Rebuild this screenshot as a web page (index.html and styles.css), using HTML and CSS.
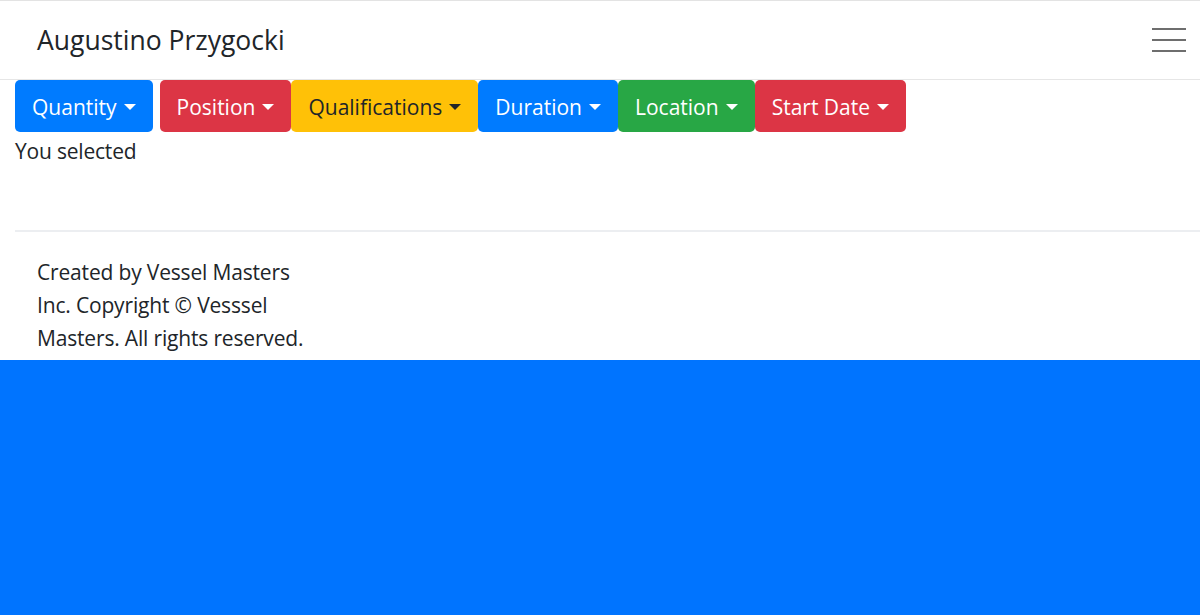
FILE: index.html
```html
<!DOCTYPE html>
<html>
<head>
<meta charset="utf-8">
<link rel="stylesheet" href="styles.css">
</head>
<body>
<div class="page">
  <nav class="navbar">
    <span class="brand">Augustino Przygocki</span>
    <button class="toggler" aria-label="menu">
      <span class="bar"></span><span class="bar"></span><span class="bar"></span>
    </button>
  </nav>
  <main class="content">
    <div class="filters">
      <button class="btn btn-blue btn-first">Quantity<span class="caret"></span></button>
      <button class="btn btn-red">Position<span class="caret"></span></button>
      <button class="btn btn-yellow">Qualifications<span class="caret"></span></button>
      <button class="btn btn-blue">Duration<span class="caret"></span></button>
      <button class="btn btn-green">Location<span class="caret"></span></button>
      <button class="btn btn-red">Start Date<span class="caret"></span></button>
    </div>
    <p class="selected">You selected</p>
    <hr class="divider">
    <footer class="footer">
      <p>Created by Vessel Masters Inc. Copyright © Vesssel Masters. All rights reserved.</p>
    </footer>
  </main>
</div>
</body>
</html>
```
FILE: styles.css
```css
html, body {
  margin: 0;
  padding: 0;
}
body {
  background: #0074ff;
  font-family: "Open Sans", "Noto Sans", sans-serif;
  color: #212529;
  height: 615px;
  overflow: hidden;
}
.page {
  background: #fff;
  height: 360px;
  border-top: 1px solid #e3e3e3;
  box-sizing: border-box;
}
.navbar {
  height: 78px;
  border-bottom: 1px solid #e6e6e6;
  display: flex;
  align-items: center;
  justify-content: space-between;
  padding: 0 14px 0 37px;
}
.brand {
  font-size: 26.5px;
  color: #212529;
}
.toggler {
  background: none;
  border: 0;
  padding: 0;
  width: 34px;
  height: 24px;
  display: flex;
  flex-direction: column;
  justify-content: space-between;
}
.bar {
  display: block;
  height: 2px;
  width: 34px;
  background: #6e6e6e;
}
.content {
  padding: 0 0 0 15px;
}
.filters {
  display: flex;
}
.btn {
  font-family: inherit;
  font-size: 21px;
  height: 52px;
  padding: 2px 17px 0;
  border: 0;
  border-radius: 5px;
  color: #fff;
  display: flex;
  align-items: center;
}
.btn-first {
  margin-right: 7px;
}
.btn-blue { background: #007bff; }
.btn-red { background: #dc3545; }
.btn-yellow { background: #ffc107; color: #212529; }
.btn-green { background: #28a745; }
.caret {
  display: inline-block;
  margin-left: 7px;
  width: 0;
  height: 0;
  border-left: 6px solid transparent;
  border-right: 6px solid transparent;
  border-top: 6px solid currentColor;
}
.selected {
  margin: 4px 0 0;
  font-size: 21px;
  line-height: 30px;
  letter-spacing: -0.2px;
}
.divider {
  margin: 64px 0 0;
  border: 0;
  border-top: 2px solid #eceef1;
}
.footer {
  padding: 24px 0 0 22px;
}
.footer p {
  margin: 0;
  width: 285px;
  font-size: 21px;
  line-height: 33px;
  letter-spacing: -0.17px;
}
```
